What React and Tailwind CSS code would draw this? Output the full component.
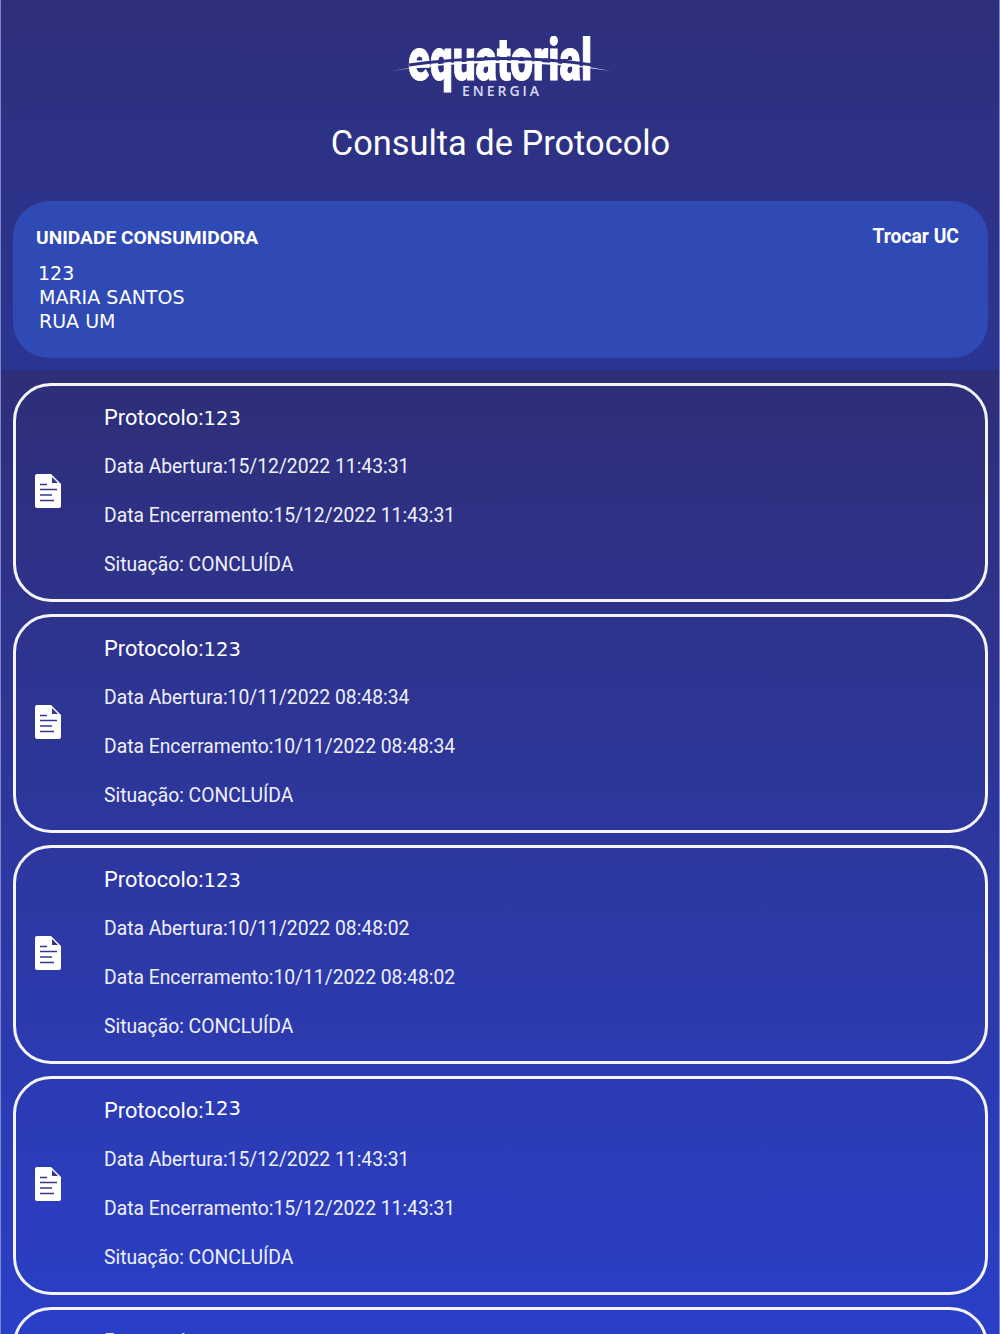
const protocolos = [
  { abertura: "15/12/2022 11:43:31", encerramento: "15/12/2022 11:43:31" },
  { abertura: "10/11/2022 08:48:34", encerramento: "10/11/2022 08:48:34" },
  { abertura: "10/11/2022 08:48:02", encerramento: "10/11/2022 08:48:02" },
  { abertura: "15/12/2022 11:43:31", encerramento: "15/12/2022 11:43:31", raised: true },
];

const dejavu = "font-['DejaVu_Sans',sans-serif]";

const Logo = () => (
  <svg width="224" height="64" viewBox="0 0 224 64" className="block">
    <text
      transform="translate(19 44) scale(1 1.3)"
      fill="#fff"
      stroke="#fff"
      strokeWidth="0.8"
      textLength="184"
      lengthAdjust="spacingAndGlyphs"
      fontFamily="Roboto, sans-serif"
      fontWeight="900"
      fontSize="45"
    >
      equatorial
    </text>
    <path d="M20 29 Q 112 16 204 29" fill="none" stroke="#2e3082" strokeWidth="3" />
    <path d="M2 35 Q 112 14 222 35 Q 112 19 2 35 Z" fill="#fff" />
    <text
      x="113"
      y="60"
      fill="#d9dcf0"
      textAnchor="middle"
      fontFamily="'Open Sans', sans-serif"
      fontWeight="600"
      fontSize="14"
      letterSpacing="3"
    >
      ENERGIA
    </text>
  </svg>
);

const DocIcon = () => (
  <svg width="26" height="34" viewBox="0 0 26 34" className="block">
    <path d="M2 0 H16 L26 10 V32 a2 2 0 0 1 -2 2 H2 a2 2 0 0 1 -2 -2 V2 a2 2 0 0 1 2 -2 Z" fill="#fff" />
    <path d="M17 3 V9 H23 Z" fill="#34378c" />
    <path d="M5 10.5 H12 M5 15.5 H22 M5 21 H17 M5 26.5 H19" stroke="#34378c" strokeWidth="1.6" />
  </svg>
);

const Card = ({ abertura, encerramento, raised }) => (
  <div className="h-[219px] rounded-[38px] border-[3px] border-white/95 flex items-center pb-[4px] shrink-0 text-[#eef0fa]">
    <div className="w-[88px] pl-[19px] shrink-0">
      <DocIcon />
    </div>
    <div className="flex flex-col">
      <p className="h-[49px] leading-[49px] text-[21.8px] text-white">
        Protocolo:
        <span className={`${dejavu} text-[19.5px] ${raised ? "relative -top-[3px]" : ""}`}>123</span>
      </p>
      <p className="h-[49px] leading-[49px] text-[19.3px]">Data Abertura:{abertura}</p>
      <p className="h-[49px] leading-[49px] text-[19.3px]">Data Encerramento:{encerramento}</p>
      <p className="h-[49px] leading-[49px] text-[19.3px]">Situação: CONCLUÍDA</p>
    </div>
  </div>
);

export default function App() {
  return (
    <div className="h-[1334px] overflow-hidden border-x border-[#7f86c8] font-['Roboto',sans-serif] text-white bg-[#2b3cc0]">
      {/* HEADER */}
      <div className="h-[370px] pl-[12px] pr-[11px] pt-[36px] flex flex-col items-stretch bg-gradient-to-b from-[#2e2f7c] to-[#2b3592]">
        <div className="flex justify-center">
          <Logo />
        </div>
        <h1 className="text-center text-[34.4px] leading-[40px] mt-[23px]">Consulta de Protocolo</h1>

        <div className="mt-[38px] h-[157px] rounded-[36px] bg-[#304ab5] pl-[23px] pr-[29px] pt-[25px]">
          <div className="flex justify-between">
            <span className="font-bold text-[19.2px] leading-[24px]">UNIDADE CONSUMIDORA</span>
            <span className="font-bold text-[19.3px] leading-[22px]">Trocar UC</span>
          </div>
          <div className={`${dejavu} text-[19px] leading-[24px] mt-[11px]`}>
            <p className="pl-[2px]">123</p>
            <p className="pl-[3px]">MARIA SANTOS</p>
            <p className="pl-[3px]">RUA UM</p>
          </div>
        </div>
      </div>

      {/* LISTA */}
      <div className="h-[964px] pl-[12px] pr-[11px] pt-[13px] flex flex-col gap-[12px] bg-gradient-to-b from-[#2e2e78] to-[#2a3fc8]">
        {protocolos.map((p, i) => (
          <Card key={i} {...p} />
        ))}
        <div className="h-[219px] rounded-[38px] border-[3px] border-white/95 shrink-0 pl-[88px] pt-[19px]">
          <p className="text-[21.8px] leading-[26px] text-white/90">
            Protocolo:<span className={`${dejavu} text-[19.5px]`}>987564567</span>
          </p>
        </div>
      </div>
    </div>
  );
}
